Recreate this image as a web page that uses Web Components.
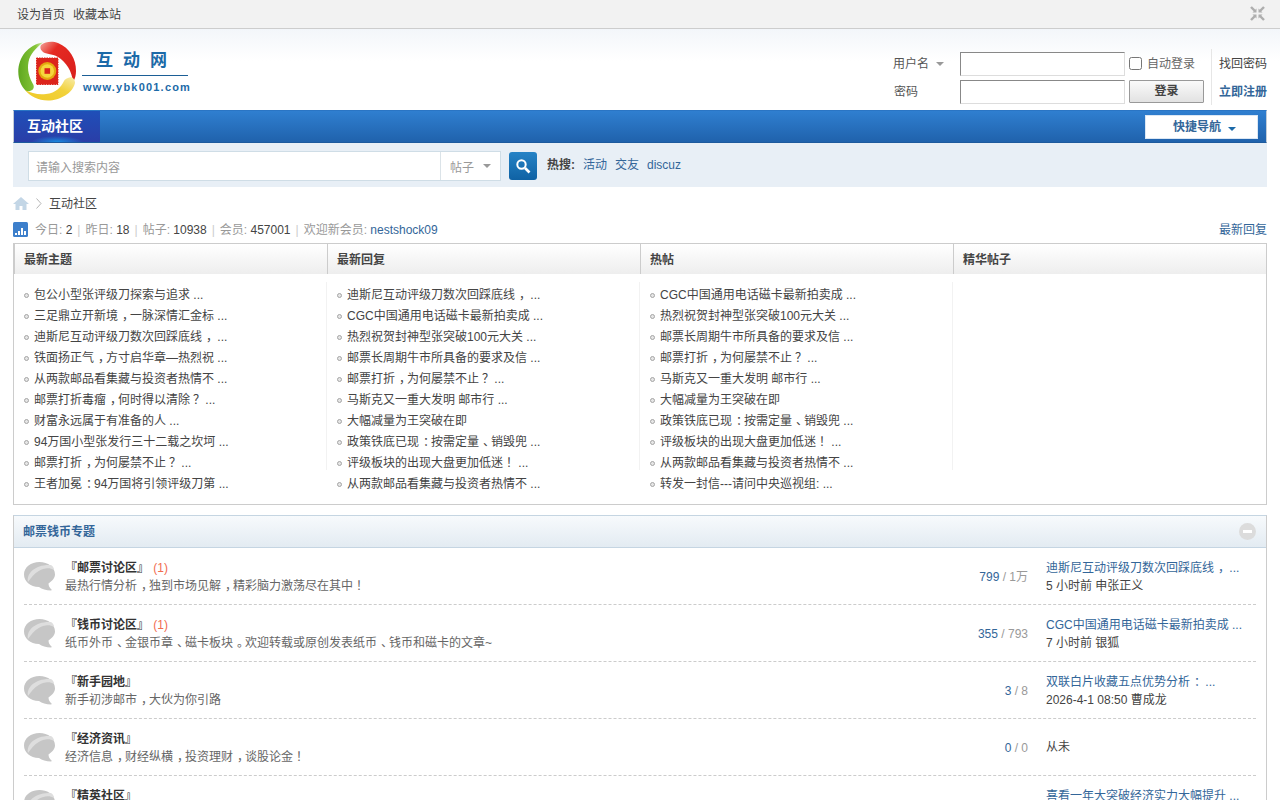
<!DOCTYPE html>
<html lang="zh">
<head>
<meta charset="utf-8">
<title>互动社区</title>
<style>
  html, body { margin: 0; padding: 0; height: 800px; overflow: hidden; background: #fff; }
  body { font: 12px/1.5 "Liberation Sans", "Noto Sans CJK SC", sans-serif; color: #444; }
  .wrap { display: block; margin: 0 13px; }
</style>
</head>
<body>
<top-bar></top-bar>
<site-header></site-header>
<div class="wrap">
  <main-nav></main-nav>
  <search-bar></search-bar>
  <bread-crumb></bread-crumb>
  <forum-stats></forum-stats>
  <portal-lists></portal-lists>
  <forum-cat title="邮票钱币专题">
    <forum-row name="『邮票讨论区』" today="(1)" desc="最热行情分析，独到市场见解，精彩脑力激荡尽在其中！" a="799" b="1万" last="迪斯尼互动评级刀数次回踩底线， ..." when="5 小时前 申张正义"></forum-row>
    <forum-row name="『钱币讨论区』" today="(1)" desc="纸币外币、金银币章、磁卡板块。欢迎转载或原创发表纸币、钱币和磁卡的文章~" a="355" b="793" last="CGC中国通用电话磁卡最新拍卖成 ..." when="7 小时前 银狐"></forum-row>
    <forum-row name="『新手园地』" desc="新手初涉邮市，大伙为你引路" a="3" b="8" last="双联白片收藏五点优势分析： ..." when="2026-4-1 08:50 曹成龙"></forum-row>
    <forum-row name="『经济资讯』" desc="经济信息，财经纵横，投资理财，谈股论金！" a="0" b="0" never="从未"></forum-row>
    <forum-row name="『精英社区』" desc="精英荟萃，高手过招" a="1" b="1" last="喜看一年大突破经济实力大幅提升 ..." when="2026-3-28 10:12 曹成龙"></forum-row>
  </forum-cat>
</div>

<script>
// the reference centres CJK punctuation in its cell, the SC font keeps it on the left
const punct = s => s.replace(/[，？！：、。]/g, c =>
  `<span style="display:inline-block;width:12px;text-indent:${'？！'.includes(c) ? 3 : 4}px">${c}</span>`);

const define = (name, css, html) => {
  customElements.define(name, class extends HTMLElement {
    connectedCallback() {
      const root = this.attachShadow({ mode: 'open' });
      const body = typeof html === 'function' ? html(this) : html;
      root.innerHTML = `<style>${css}</style>${body}`;
    }
  });
};

define('top-bar', `
  :host { display: flex; justify-content: space-between; align-items: center; height: 28px; padding: 0 15px 0 17px;
    background: #f2f2f2; border-bottom: 1px solid #cdcdcd; color: #444; }
  div { padding-top: 1px; }
  a { margin-right: 8px; }
  svg { display: block; margin-top: -2px; }
`, `
  <div><a>设为首页</a><a>收藏本站</a></div>
  <svg width="15" height="15" viewBox="0 0 15 15" fill="#aeaeae" stroke="#aeaeae">
    <g><path d="M1 1l4 4" stroke-width="2.400" fill="none"/><path d="M6.500 2.500v4h-4z" stroke="none"/></g>
    <g transform="matrix(-1 0 0 1 15 0)"><path d="M1 1l4 4" stroke-width="2.400" fill="none"/><path d="M6.500 2.500v4h-4z" stroke="none"/></g>
    <g transform="matrix(1 0 0 -1 0 15)"><path d="M1 1l4 4" stroke-width="2.400" fill="none"/><path d="M6.500 2.500v4h-4z" stroke="none"/></g>
    <g transform="matrix(-1 0 0 -1 15 15)"><path d="M1 1l4 4" stroke-width="2.400" fill="none"/><path d="M6.500 2.500v4h-4z" stroke="none"/></g>
  </svg>
`);

define('site-header', `
  :host { display: flex; justify-content: space-between; height: 81px; box-sizing: border-box; padding: 0 13px;
    background: linear-gradient(#f3f6fa, #fff 32px); }
  .logo { display: flex; align-items: flex-start; padding: 12px 0 0 5px; }
  .logo svg { display: block; flex: none; }
  .brand { margin-left: 6px; width: 106px; padding-top: 6px; color: #1c6aa8; }
  .cn { font-size: 17px; line-height: 28px; font-weight: bold; letter-spacing: 10px; padding-left: 14px; border-bottom: 1px solid #1c5f96; height: 28px; white-space: nowrap; }
  .en { font-size: 11px; line-height: 14px; font-weight: bold; letter-spacing: 1.200px; padding-top: 4px; padding-left: 1px; white-space: nowrap; }
  .login { display: grid; grid-template-columns: 67px 165px 86px 56px; grid-template-rows: 28px 28px; margin-top: 20px; }
  .lab { display: flex; align-items: center; padding-top: 2px; color: #555; box-sizing: border-box; }
  .lab i { width: 0; height: 0; margin-left: 7px; border: 4px solid transparent; border-top-color: #999; border-bottom: 0; }
  .pw { padding-left: 1px; }
  .box { height: 24px; margin-top: 3px; width: 165px; box-sizing: border-box; border: 1px solid #ddd; border-top-color: #888; border-left-color: #888; background: #fff; }
  .auto { display: flex; align-items: center; padding: 2px 0 0 4px; box-sizing: border-box; color: #666; }
  .auto input { margin: -1px 5px 0 0; width: 13px; height: 13px; }
  .btn { margin: 3px 0 0 4px; width: 75px; height: 23px; box-sizing: border-box; border: 1px solid #999; border-radius: 1px;
    background: linear-gradient(#fafafa, #e2e2e2); text-align: center; font-weight: bold; line-height: 21px; color: #444; }
  .side { border-left: 1px solid #e6e6e6; padding: 2px 0 0 7px; box-sizing: border-box; display: flex; align-items: center; white-space: nowrap; }
  .side.reg { font-weight: bold; color: #369; }
`, `
  <div class="logo">
    <svg width="58" height="60" viewBox="0 0 58 60">
      <defs>
        <linearGradient id="g" x1="0" y1="0" x2="1" y2="0"><stop offset="0" stop-color="#5fa820"/><stop offset=".7" stop-color="#86c63a"/><stop offset="1" stop-color="#d6eab0"/></linearGradient>
        <linearGradient id="r" x1="0" y1="0" x2="1" y2="1"><stop offset="0" stop-color="#f3a79c"/><stop offset=".3" stop-color="#e52a22"/><stop offset="1" stop-color="#d81e1c"/></linearGradient>
        <linearGradient id="y" x1="1" y1="0" x2="0" y2="1"><stop offset="0" stop-color="#f8ecab"/><stop offset=".4" stop-color="#f2d23c"/><stop offset="1" stop-color="#efc926"/></linearGradient>
      </defs>
      <path d="M25 1.500C10 4 .3 16 .3 31c0 7 2.700 14 7.700 19 4 1 9-1 7.500-6-4.500-8-6.500-15-5-23C12 13 18 7 25 1.500z" fill="url(#g)"/>
      <path d="M23 4c5-4 12-4 17-2 12 5 18 16 18 28 0 4-1 8-3 11-1-11-7-20-15-25-6-4-13-2-16-6-2-2-2-4-1-6z" fill="url(#r)"/>
      <path d="M50 37c4-2 7 1 7 5-2 10-15 17.500-27 17.500-10 0-18-4.500-23-10.500 6 3 13 5 21 4 10-1 15-7 18-13 1-2 2-2 4-3z" fill="url(#y)"/>
      <rect x="18.500" y="17" width="21.500" height="26.500" fill="#dc241c" stroke="#dc241c" stroke-dasharray="1.500 1"/>
      <circle cx="29.300" cy="30" r="9" fill="#e3a90f"/>
      <circle cx="29.300" cy="30" r="6.800" fill="#f6d63d"/>
      <rect x="26.500" y="27.200" width="5.600" height="5.600" fill="#d9251c"/>
    </svg>
    <div class="brand">
      <div class="cn">互动网</div>
      <div class="en">www.ybk001.com</div>
    </div>
  </div>
  <div class="login">
    <div class="lab">用户名<i></i></div><div class="box"></div>
    <div class="auto"><input type="checkbox">自动登录</div><div class="side">找回密码</div>
    <div class="lab pw">密码</div><div class="box"></div>
    <div><div class="btn">登录</div></div><div class="side reg">立即注册</div>
  </div>
`);

define('main-nav', `
  :host { display: flex; justify-content: space-between; height: 33px; box-sizing: border-box;
    background: linear-gradient(#2f7fd0, #2062ac); border-top: 1px solid #2a75c4; border-bottom: 1px solid #1d5a9d;
    border-left: 1px solid #c3ccd6; border-right: 1px solid #c3ccd6; }
  .cur { width: 86px; box-sizing: border-box; padding-left: 13px; color: #fff; font-size: 14px; font-weight: bold; line-height: 31px;
    background: radial-gradient(ellipse 26px 6px at 50% 100%, #1a8ce0, transparent), linear-gradient(#1f4fb8, #2a3ea8); }
  .quick { width: 113px; height: 24px; margin: 4px 8px 0 0; box-sizing: border-box; border: 1px solid #dbe7f4; background: #fff;
    color: #369; font-weight: bold; line-height: 22px; display: flex; align-items: center; padding-left: 27px; }
  .quick i { width: 0; height: 0; margin-left: 7px; border: 4px solid transparent; border-top-color: #1b69a8; border-bottom: 0; margin-top: 3px; }
`, `<div class="cur">互动社区</div><div class="quick">快捷导航<i></i></div>`);

define('search-bar', `
  :host { display: flex; align-items: flex-start; height: 44px; padding-left: 15px; background: #e8eff6; }
  .f { display: flex; width: 473px; height: 30px; margin-top: 8px; box-sizing: border-box; border: 1px solid #cfdde6; background: #fff; color: #999; line-height: 32px; }
  .q { flex: 1; height: 28px; padding-left: 8px; margin-left: -1px; }
  .t { width: 60px; height: 28px; border-left: 1px solid #dbe3e8; padding-left: 9px; box-sizing: border-box; display: flex; align-items: center; }
  .t span { line-height: 18px; padding-top: 3px; }
  .t i { width: 0; height: 0; margin-left: 9px; border: 4px solid transparent; border-top-color: #999; border-bottom: 0; }
  .go { width: 28px; height: 28px; margin: 9px 10px 0 8px; border-radius: 3px; background: linear-gradient(#2683c6, #0f62a4); display: flex; align-items: center; justify-content: center; }
  .hot { margin-top: 13px; }
  b { color: #444; margin-right: 8px; }
  a { color: #369; margin-right: 8px; }
`, `
  <div class="f"><div class="q">请输入搜索内容</div><div class="t"><span>帖子</span><i></i></div></div>
  <div class="go"><svg width="16" height="16" viewBox="0 0 16 16" fill="none" stroke="#fff"><circle cx="6.500" cy="6.500" r="4.200" stroke-width="2"/><path d="M10 10l4.500 4.500" stroke-width="2.600"/></svg></div>
  <div class="hot"><b>热搜:</b><a>活动</a><a>交友</a><a>discuz</a></div>
`);

define('bread-crumb', `
  :host { display: flex; align-items: center; height: 33px; color: #444; }
  svg { display: block; }
  .sep { margin: 0 7px; }
`, `
  <svg width="16" height="13" viewBox="0 0 16 13" fill="#c3d6e6"><path d="M8 0L0 7h2.500v6h4V9h3v4h4V7H16z"/></svg>
  <svg class="sep" width="6" height="11" viewBox="0 0 6 11" fill="none" stroke="#b5b5b5"><path d="M.5.500l4.500 5-4.500 5"/></svg>
  <span>互动社区</span>
`);

define('forum-stats', `
  :host { display: flex; justify-content: space-between; align-items: center; height: 19px; margin-bottom: 4px; color: #999; }
  .l { display: flex; align-items: center; }
  svg { display: block; margin-right: 7px; }
  em { font-style: normal; color: #444; }
  s { text-decoration: none; margin: 0 5px; color: #ccc; }
  a { color: #369; }
`, `
  <div class="l">
    <svg width="15" height="15" viewBox="0 0 15 15"><rect width="15" height="15" rx="1.500" fill="#3d7fcb"/><path d="M2 11h2v2H2zM5 9h2v4H5zM8 6h2v7H8zM11 9h2v4h-2z" fill="#fff"/></svg>
    <span>今日: <em>2</em><s>|</s>昨日: <em>18</em><s>|</s>帖子: <em>10938</em><s>|</s>会员: <em>457001</em><s>|</s>欢迎新会员: <a>nestshock09</a></span>
  </div>
  <a>最新回复</a>
`);

const lists = [
  ['最新主题', ['包公小型张评级刀探索与追求 ...','三足鼎立开新境，一脉深情汇金标 ...','迪斯尼互动评级刀数次回踩底线， ...','铁面扬正气，方寸启华章—热烈祝 ...','从两款邮品看集藏与投资者热情不 ...','邮票打折毒瘤，何时得以清除？ ...','财富永远属于有准备的人 ...','94万国小型张发行三十二载之坎坷 ...','邮票打折，为何屡禁不止？ ...','王者加冕：94万国将引领评级刀第 ...']],
  ['最新回复', ['迪斯尼互动评级刀数次回踩底线， ...','CGC中国通用电话磁卡最新拍卖成 ...','热烈祝贺封神型张突破100元大关 ...','邮票长周期牛市所具备的要求及信 ...','邮票打折，为何屡禁不止？ ...','马斯克又一重大发明 邮市行 ...','大幅减量为王突破在即','政策铁底已现：按需定量、销毁兜 ...','评级板块的出现大盘更加低迷！ ...','从两款邮品看集藏与投资者热情不 ...']],
  ['热帖', ['CGC中国通用电话磁卡最新拍卖成 ...','热烈祝贺封神型张突破100元大关 ...','邮票长周期牛市所具备的要求及信 ...','邮票打折，为何屡禁不止？ ...','马斯克又一重大发明 邮市行 ...','大幅减量为王突破在即','政策铁底已现：按需定量、销毁兜 ...','评级板块的出现大盘更加低迷！ ...','从两款邮品看集藏与投资者热情不 ...','转发一封信---请问中央巡视组: ...']],
  ['精华帖子', []],
];

define('portal-lists', `
  :host { display: grid; grid-template-columns: repeat(4, 1fr); height: 262px; box-sizing: border-box; border: 1px solid #ccc; }
  .col { position: relative; }
  .col + .col::before { content: ""; position: absolute; left: -1px; top: 38px; height: 188px; border-left: 1px solid #f2f2f2; }
  h3 { margin: 0; height: 30px; box-sizing: border-box; padding-left: 9px; font-size: 12px; line-height: 32px; color: #444;
    background: linear-gradient(#fff, #eee); border-left: 1px solid #ccc; }
  ul { margin: 0; padding: 11px 0 0 10px; list-style: none; }
  li { height: 21px; line-height: 21px; color: #444; display: flex; align-items: center; white-space: pre; }
  li::before { content: ""; width: 3px; height: 3px; margin-right: 5px; border: 1px solid #a5a5a5; border-radius: 50%; background: #e6e6e6; }
`, () => lists.map(([t, items]) => `<div class="col"><h3>${t}</h3><ul>${items.map(i => `<li><span>${punct(i)}</span></li>`).join('')}</ul></div>`).join(''));

customElements.define('forum-cat', class extends HTMLElement {
  connectedCallback() {
    this.attachShadow({ mode: 'open' }).innerHTML = `<style>
      :host { display: block; margin-top: 10px; border: 1px solid #ccc; border-top-color: #c5d5e2; }
      .h { display: flex; justify-content: space-between; align-items: center; height: 32px; box-sizing: border-box; padding: 0 10px 0 9px;
        background: linear-gradient(#f7fafc, #e3ebf2); border-bottom: 1px solid #c5d5e2; color: #369; font-weight: bold; }
      i { width: 17px; height: 17px; border-radius: 50%; background: #dcdcdc; position: relative; }
      i::after { content: ""; position: absolute; left: 4px; top: 7px; width: 9px; height: 3px; background: #fff; }
      .b { padding: 0 10px; }
    </style>
    <div class="h"><span>${this.getAttribute('title')}</span><i></i></div><div class="b"><slot></slot></div>`;
  }
});

customElements.define('forum-row', class extends HTMLElement {
  connectedCallback() {
    const g = n => this.getAttribute(n);
    const last = g('never')
      ? `<div class="never">${g('never')}</div>`
      : `<div class="lt"><a>${punct(g('last'))}</a></div><div class="lt w">${g('when')}</div>`;
    this.attachShadow({ mode: 'open' }).innerHTML = `<style>
      :host { display: flex; align-items: flex-start; height: 57px; box-sizing: border-box; border-bottom: 1px dashed #ccc; line-height: 18px; }
      svg { display: block; margin: 14px 10px 0 0; flex: none; }
      .main { flex: 1; padding-top: 11px; }
      .n { font-weight: bold; color: #333; }
      .t { color: #f26c4f; margin-left: 1px; }
      .d { color: #666; }
      .c { width: 60px; text-align: right; margin-top: 20px; color: #999; white-space: nowrap; }
      .c a { color: #369; }
      .last { width: 210px; margin-left: 18px; padding-top: 11px; white-space: pre; }
      .lt a { color: #369; }
      .w { color: #444; }
      .never { padding-top: 8px; color: #444; }
    </style>
    <svg width="31" height="30" viewBox="0 0 31 30">
      <path d="M15.500 0C7 0 0 5 0 12.500 0 19 6 25 15 25c3 2 7 3.500 12 3.500 1 0 1-1-.5-2-1-1-2-3-2-5C28 19 31 16 31 12.500 31 5 24 0 15.500 0z" fill="#c6c6c6"/>
      <path d="M4 20C2 11 12 2 27 3c2 1 3 3 3 5C24 4 13 6 4 20z" fill="#dedede"/>
    </svg>
    <div class="main"><div><span class="n">${g('name')}</span>${g('today') ? ` <span class="t">${g('today')}</span>` : ''}</div><div class="d">${punct(g('desc'))}</div></div>
    <div class="c"><a>${g('a')}</a> / ${g('b')}</div>
    <div class="last">${last}</div>`;
  }
});
</script>
</body>
</html>
